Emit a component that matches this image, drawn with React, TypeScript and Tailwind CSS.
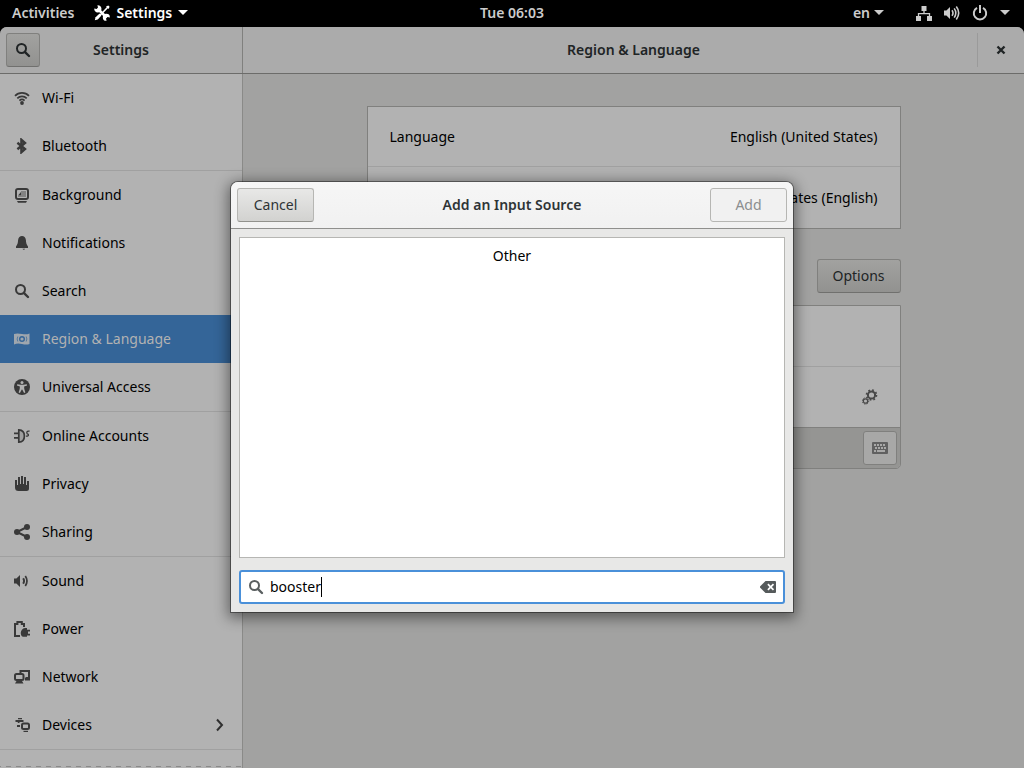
import React from "react";

type IconProps = { children: React.ReactNode; className?: string };

function Icon({ children, className = "" }: IconProps) {
  return (
    <svg
      viewBox="0 0 16 16"
      width="16"
      height="16"
      fill="currentColor"
      aria-hidden="true"
      className={"shrink-0 " + className}
    >
      {children}
    </svg>
  );
}

const SearchGlyph = () => (
  <>
    <circle cx="6.5" cy="6.5" r="4.5" fill="none" stroke="currentColor" strokeWidth="2" />
    <path d="M9.8 9.8L14 14" stroke="currentColor" strokeWidth="2.4" strokeLinecap="round" />
  </>
);

const SpeakerGlyph = () => <path d="M0 5.5h2.4L6 2v12L2.4 10.5H0z" />;

const icons = {
  wifi: (
    <>
      <g fill="none" stroke="currentColor" strokeWidth="1.7">
        <path d="M1 5.8C4.8 1.9 11.2 1.9 15 5.8" />
        <path d="M3.3 8.3c2.6-2.6 6.8-2.6 9.4 0" />
        <path d="M5.4 10.6c1.5-1.4 3.7-1.4 5.2 0" />
      </g>
      <circle cx="8" cy="13" r="1.9" />
    </>
  ),
  bluetooth: (
    <path
      d="M3.4 4.800l7.600 6.200L7.4 14.2V1.8L11 5l-7.600 6.200"
      fill="none"
      stroke="currentColor"
      strokeWidth="2.4"
    />
  ),
  background: (
    <>
      <path
        fillRule="evenodd"
        d="M4 1h8C14 1 15 2 15 4v6c0 2-1 3-3 3H4C2 13 1 12 1 10V4C1 2 2 1 4 1zM3.800 3Q3 3 3 3.800v6.400q0 .8.8.8h8.400q.8 0 .8-.8V3.800Q13 3 12.200 3z"
      />
      <path d="M4 8.500L7 5v3.500z" />
      <path d="M7 4h5v6H4V9h3z" opacity=".4" />
      <path d="M3 14h10l-1 1.800H4z" />
    </>
  ),
  notifications: (
    <>
      <path d="M8 1c-2 0-3.600 1.500-3.900 4C3.900 8 3.500 9.500 2 11.500V13h12v-1.500c-1.500-2-1.900-3.500-2.100-6.500C11.600 2.500 10 1 8 1z" />
      <path d="M8.500 13.800h2.600q-.4 1-1.300 1t-1.300-1z" />
    </>
  ),
  search: <SearchGlyph />,
  region: (
    <>
      <path
        fillRule="evenodd"
        d="M0 3c3-1 5-.5 8 0s5 .500 7.500-.500V13c-2.500 1-5 .500-7.500 0s-5-1-8 .500zM8 5a3 3 0 100 6 3 3 0 000-6zm0 1.400a1.600 1.600 0 110 3.200 1.600 1.600 0 010-3.200z"
        opacity=".85"
      />
      <path
        d="M3.800 5.500q-1.300 2.500 0 5M12.200 5.500q1.300 2.500 0 5"
        fill="none"
        stroke="#346598"
        strokeWidth=".7"
      />
    </>
  ),
  access: (
    <>
      <circle cx="8" cy="8" r="8" />
      <circle cx="8" cy="3.600" r="1.500" fill="#b2b2b2" />
      <path
        d="M3.200 5.300l3.300.5h3l3.300-.5.3 1.200-3 1 .2 2.500 1.100 3.600-1.300.5L8.200 10.500h-.4L5.900 14.100l-1.300-.5L5.700 10l.2-2.500-3-1z"
        fill="#b2b2b2"
      />
    </>
  ),
  accounts: (
    <>
      <path d="M0 4.500h4v1.800H0zM0 9h4v1.800H0z" />
      <path d="M5 2q5 0 5.500 6Q10 14 5 14z" fillOpacity=".15" />
      <path d="M4.800 1.800q5.600.2 5.600 6.200t-5.600 6.200z" fill="none" stroke="currentColor" strokeWidth="1.700" />
      <path
        d="M15.600 3.200q-2.800-.4-2.800 1.200t1.500 2q.7 2-2.300 1.800"
        fill="none"
        stroke="currentColor"
        strokeWidth="1.300"
      />
    </>
  ),
  privacy: (
    <path d="M1 4h2v5h1V1h2v7h1V0h2v8h1V1h2v8h1V5h2v7.500Q15 15 12.500 15h-8Q1 15 1 11.500z" />
  ),
  sharing: (
    <>
      <path d="M13 3L3 8l10 5" fill="none" stroke="currentColor" strokeWidth="2" />
      <circle cx="13" cy="3" r="3" />
      <circle cx="3" cy="8" r="3" />
      <circle cx="13" cy="13" r="3" />
    </>
  ),
  sound: (
    <>
      <SpeakerGlyph />
      <g fill="none" stroke="currentColor">
        <path d="M9.200 5.300q1.800 2.700 0 5.400" strokeWidth="1.900" />
        <path d="M11.300 3q3.400 5 0 10" strokeWidth="1.700" />
      </g>
    </>
  ),
  power: (
    <>
      <path
        d="M6 15H1V2.900h2.400V1h4.400v1.900H10V6"
        fill="none"
        stroke="currentColor"
        strokeWidth="2"
      />
      <path d="M9 15.800C5.800 14.800 5.700 8 11 7h2v1.800h3v1.700h-2v2.300h2v1.700h-3V15.800z" />
    </>
  ),
  network: (
    <>
      <path d="M6.500 4V2H15v7h-3.500" fill="none" stroke="currentColor" strokeWidth="2" />
      <path d="M11 9h5v2.500h-5z" />
      <rect x="1" y="5" width="8.500" height="6" rx="1.500" fill="none" stroke="currentColor" strokeWidth="2" />
      <path d="M2.500 12h5.500l1.500 2.500H1z" />
    </>
  ),
  devices: (
    <>
      <path d="M4 1h4v1.200H4zM1.500 3h8v2h-4V6H3.800V5H1.500zM3 8h3v2H3z" />
      <rect x="8" y="6.500" width="7" height="5.500" rx="1.500" fill="none" stroke="currentColor" strokeWidth="2" />
      <path d="M9.500 13.800h4.500v1.200H9.500z" />
    </>
  ),
};

const groups: { label: string; icon: keyof typeof icons; active?: boolean; more?: boolean }[][] = [
  [
    { label: "Wi-Fi", icon: "wifi" },
    { label: "Bluetooth", icon: "bluetooth" },
  ],
  [
    { label: "Background", icon: "background" },
    { label: "Notifications", icon: "notifications" },
    { label: "Search", icon: "search" },
    { label: "Region & Language", icon: "region", active: true },
    { label: "Universal Access", icon: "access" },
  ],
  [
    { label: "Online Accounts", icon: "accounts" },
    { label: "Privacy", icon: "privacy" },
    { label: "Sharing", icon: "sharing" },
  ],
  [
    { label: "Sound", icon: "sound" },
    { label: "Power", icon: "power" },
    { label: "Network", icon: "network" },
    { label: "Devices", icon: "devices", more: true },
  ],
];

function DownArrow() {
  return (
    <svg viewBox="0 0 10 5" width="10" height="5" fill="currentColor" aria-hidden="true">
      <path d="M0 0h10L5 5z" />
    </svg>
  );
}

function TopBar() {
  return (
    <header className="grid h-[27px] shrink-0 grid-cols-[1fr_auto_1fr] items-center bg-black px-3 pb-[2px] font-semibold text-[#ccc]">
      <div className="flex items-center gap-5">
        <button type="button">Activities</button>
        <button type="button" className="flex items-center gap-[6px] text-white">
          <Icon>
            <path d="M3 13.500L14 2" stroke="currentColor" strokeWidth="1.600" />
            <path d="M.8 15.200L1.600 12.300 5.600 8.600 7.400 10.400 3.700 14.400z" />
            <path d="M14.300.400l1.300 1.300L14.500 4 12 1.500z" />
            <path d="M4 4l8.500 8.500" stroke="currentColor" strokeWidth="2.600" />
            <path d="M3.400.300A3.600 3.600 0 11.300 3.400L2.600 4 4 2.600z" />
            <path d="M15.800 12.600a3.500 3.500 0 10-3.200 3.200l-.600-2.300 1.500-1.500z" />
          </Icon>
          Settings
          <DownArrow />
        </button>
      </div>
      <button type="button">Tue 06:03</button>
      <div className="flex items-center justify-end gap-3">
        <button type="button" className="mr-5 flex items-center gap-1">
          en
          <DownArrow />
        </button>
        <button type="button" aria-label="System menu" className="mr-[2px] flex items-center gap-3">
          <Icon>
            <path d="M5.500 1h5v5h-5zM0 11h5v5H0zM11 11h5v5h-5z" />
            <path d="M8 6v3M2.500 11V8.700h11V11" fill="none" stroke="currentColor" strokeWidth="1.300" />
          </Icon>
          <Icon>
            <SpeakerGlyph />
            <g fill="none" stroke="currentColor" strokeWidth="1.600">
              <path d="M8 5.200q2 2.800 0 5.600M10.200 3.400q3.200 4.600 0 9.200M12.300 1.600q4.800 6.400 0 12.800" />
            </g>
          </Icon>
          <Icon>
            <path
              d="M5 2.800a6.200 6.200 0 106 0M8 0v8"
              fill="none"
              stroke="currentColor"
              strokeWidth="2"
            />
          </Icon>
          <DownArrow />
        </button>
      </div>
    </header>
  );
}

function Sidebar() {
  return (
    <nav
      aria-label="Settings panels"
      className="w-[243px] shrink-0 overflow-hidden border-r border-[#8a8a88] bg-[#b2b2b2]"
    >
      {groups.map((group, i) => (
        <ul key={i} className="border-b border-[#a0a0a0]">
          {group.map((item) => (
            <li key={item.label}>
              <a
                href="#"
                className={
                  item.active
                    ? "flex h-12 items-center gap-3 bg-[#346598] px-[14px] text-[#b2b2b2]"
                    : "flex h-12 items-center gap-3 px-[14px] text-black"
                }
              >
                <Icon className={item.active ? "" : "text-[#393939]"}>{icons[item.icon]}</Icon>
                <span className="grow">{item.label}</span>
                {item.more && (
                  <Icon className="text-[#303030]">
                    <path d="M5 2.500L10 8l-5 5.500" fill="none" stroke="currentColor" strokeWidth="2" />
                  </Icon>
                )}
              </a>
            </li>
          ))}
        </ul>
      ))}
      <div className="h-4" />
      <div className="h-px bg-[repeating-linear-gradient(90deg,#8a8a8a_0_1px,transparent_1px_6px,#8a8a8a_6px_10px)]" />
    </nav>
  );
}

function RegionPanel() {
  return (
    <main className="min-w-0 grow bg-[#a2a2a1] px-8 pt-8">
      <div className="mx-auto max-w-[534px]">
        <div className="divide-y divide-[#a0a0a0] border border-[#80807e] bg-[#b2b2b2]">
          <button type="button" className="flex h-[60px] w-full items-center justify-between px-[22px]">
            <span>Language</span>
            <span>English (United States)</span>
          </button>
          <button type="button" className="flex h-[61px] w-full items-center justify-end px-[22px]">
            United States (English)
          </button>
        </div>
        <div className="mt-[30px] flex items-center justify-end">
          <button
            type="button"
            className="h-[34px] w-[84px] rounded-[3px] border border-[#80807e] border-b-[#70706e] bg-linear-to-b from-[#a2a2a0] to-[#929290] text-[#202425]"
          >
            Options
          </button>
        </div>
        <div className="mt-3 overflow-hidden rounded-b-[5px] border border-[#80807e] bg-[#b2b2b2]">
          <div className="h-[60px]" />
          <div className="flex h-[61px] items-center justify-end border-t border-[#a0a0a0] px-[22px] text-[#484848]">
            <Icon>
              <circle cx="9.500" cy="6" r="3.600" fill="none" stroke="currentColor" strokeWidth="2" />
              <circle
                cx="9.500"
                cy="6"
                r="5"
                fill="none"
                stroke="currentColor"
                strokeWidth="1.600"
                strokeDasharray="1.800 2.130"
              />
              <circle cx="3.500" cy="12" r="2.200" fill="none" stroke="currentColor" strokeWidth="1.300" />
              <circle
                cx="3.500"
                cy="12"
                r="3.200"
                fill="none"
                stroke="currentColor"
                strokeWidth="1"
                strokeDasharray="1.200 1.310"
              />
            </Icon>
          </div>
          <div className="flex h-[41px] items-center justify-end border-t border-[#80807e] bg-[#959593] px-[3px]">
            <button
              type="button"
              aria-label="Show keyboard layout"
              className="flex size-[34px] items-center justify-center rounded-[3px] border border-[#80807e] bg-[#a8a8a7] text-[#606060]"
            >
              <Icon>
                <rect y="2" width="16" height="12" rx="1" />
                <path
                  d="M2 5h12M3 8h12M2 11h12"
                  stroke="#a8a8a7"
                  strokeWidth="1.800"
                  strokeDasharray="2 1"
                />
                <path d="M5 11h6" stroke="#a8a8a7" strokeWidth="1.800" />
              </Icon>
            </button>
          </div>
        </div>
      </div>
    </main>
  );
}

function AddSourceDialog() {
  return (
    <div className="absolute inset-0 flex items-center justify-center pb-[2px]">
      <section
        role="dialog"
        aria-modal="true"
        aria-label="Add an Input Source"
        className="w-[562px] overflow-hidden rounded-t-[7px] bg-[#e8e8e7] shadow-[0_0_0_1px_rgba(0,0,0,0.4),0_3px_14px_3px_rgba(0,0,0,0.45)]"
      >
        <header className="flex h-[47px] items-center justify-between border-b border-[#8f8f8d] bg-linear-to-b from-[#f6f6f6] to-[#f1f1f1] px-[6px]">
          <button
            type="button"
            className="h-[34px] w-[77px] rounded-[3px] border border-[#b6b6b3] border-b-[#91918c] bg-linear-to-b from-[#e8e8e7] to-[#d2d2d0] text-[#2e3436]"
          >
            Cancel
          </button>
          <h2 className="font-semibold text-[#2e3436]">Add an Input Source</h2>
          <button
            type="button"
            disabled
            className="h-[34px] w-[77px] rounded-[3px] border border-[#b6b6b3] bg-[#f1f1f1] text-[#8b8e8f]"
          >
            Add
          </button>
        </header>
        <div className="flex flex-col gap-[12px] p-2">
          <ul className="h-[321px] border border-[#b6b6b3] bg-white">
            <li className="flex h-9 items-center justify-center text-black">Other</li>
          </ul>
          <label className="flex h-[34px] items-center rounded-[3px] border-2 border-[#4a90d9] bg-white px-[7px]">
            <Icon className="mr-[6px] text-[#5a5f60]">
              <SearchGlyph />
            </Icon>
            <input
              type="text"
              aria-label="Search input sources"
              defaultValue="booster"
              className="field-sizing-content bg-transparent text-black outline-none"
            />
            <span className="h-5 w-px bg-black" />
            <button type="button" aria-label="Clear" className="ml-auto text-[#555a5b]">
              <Icon>
                <path
                  fillRule="evenodd"
                  d="M5.500 2H15q1 0 1 1v10q0 1-1 1H5.500L0 8.500v-1zM7.300 5.700L9.500 8l-2.200 2.300 1.200 1.200L10.700 9.200l2.200 2.300 1.200-1.200L11.900 8l2.200-2.300-1.200-1.200-2.200 2.300-2.200-2.300z"
                />
              </Icon>
            </button>
          </label>
        </div>
      </section>
    </div>
  );
}

export default function App() {
  return (
    <div className="flex h-screen flex-col overflow-hidden bg-black font-['Noto_Sans','Open_Sans',sans-serif] text-[14px] leading-5 text-black">
      <TopBar />
      <div className="relative flex min-h-0 grow flex-col overflow-hidden rounded-t-[7px] bg-[#a2a2a1]">
        <header className="flex h-[47px] shrink-0 border-b border-[#6c6c6a] bg-[#ababab] font-semibold text-[#202425]">
          <div className="flex w-[243px] shrink-0 items-center border-r border-[#80807e] px-[6px]">
            <button
              type="button"
              aria-label="Search"
              className="flex size-[34px] items-center justify-center rounded-[3px] border border-[#80807e] border-b-[#70706e] bg-linear-to-b from-[#a2a2a0] to-[#929290]"
            >
              <Icon>
                <SearchGlyph />
              </Icon>
            </button>
            <h1 className="grow pr-[34px] text-center">Settings</h1>
          </div>
          <div className="flex grow items-center">
            <h1 className="grow pl-[47px] text-center">Region &amp; Language</h1>
            <button
              type="button"
              aria-label="Close"
              className="flex h-[34px] w-[47px] items-center justify-center border-l border-[#9a9a9a]"
            >
              <Icon>
                <path d="M4.500 4.500l7 7M11.500 4.500l-7 7" stroke="currentColor" strokeWidth="2.400" />
              </Icon>
            </button>
          </div>
        </header>
        <div className="flex min-h-0 grow">
          <Sidebar />
          <RegionPanel />
        </div>
        <AddSourceDialog />
      </div>
    </div>
  );
}
